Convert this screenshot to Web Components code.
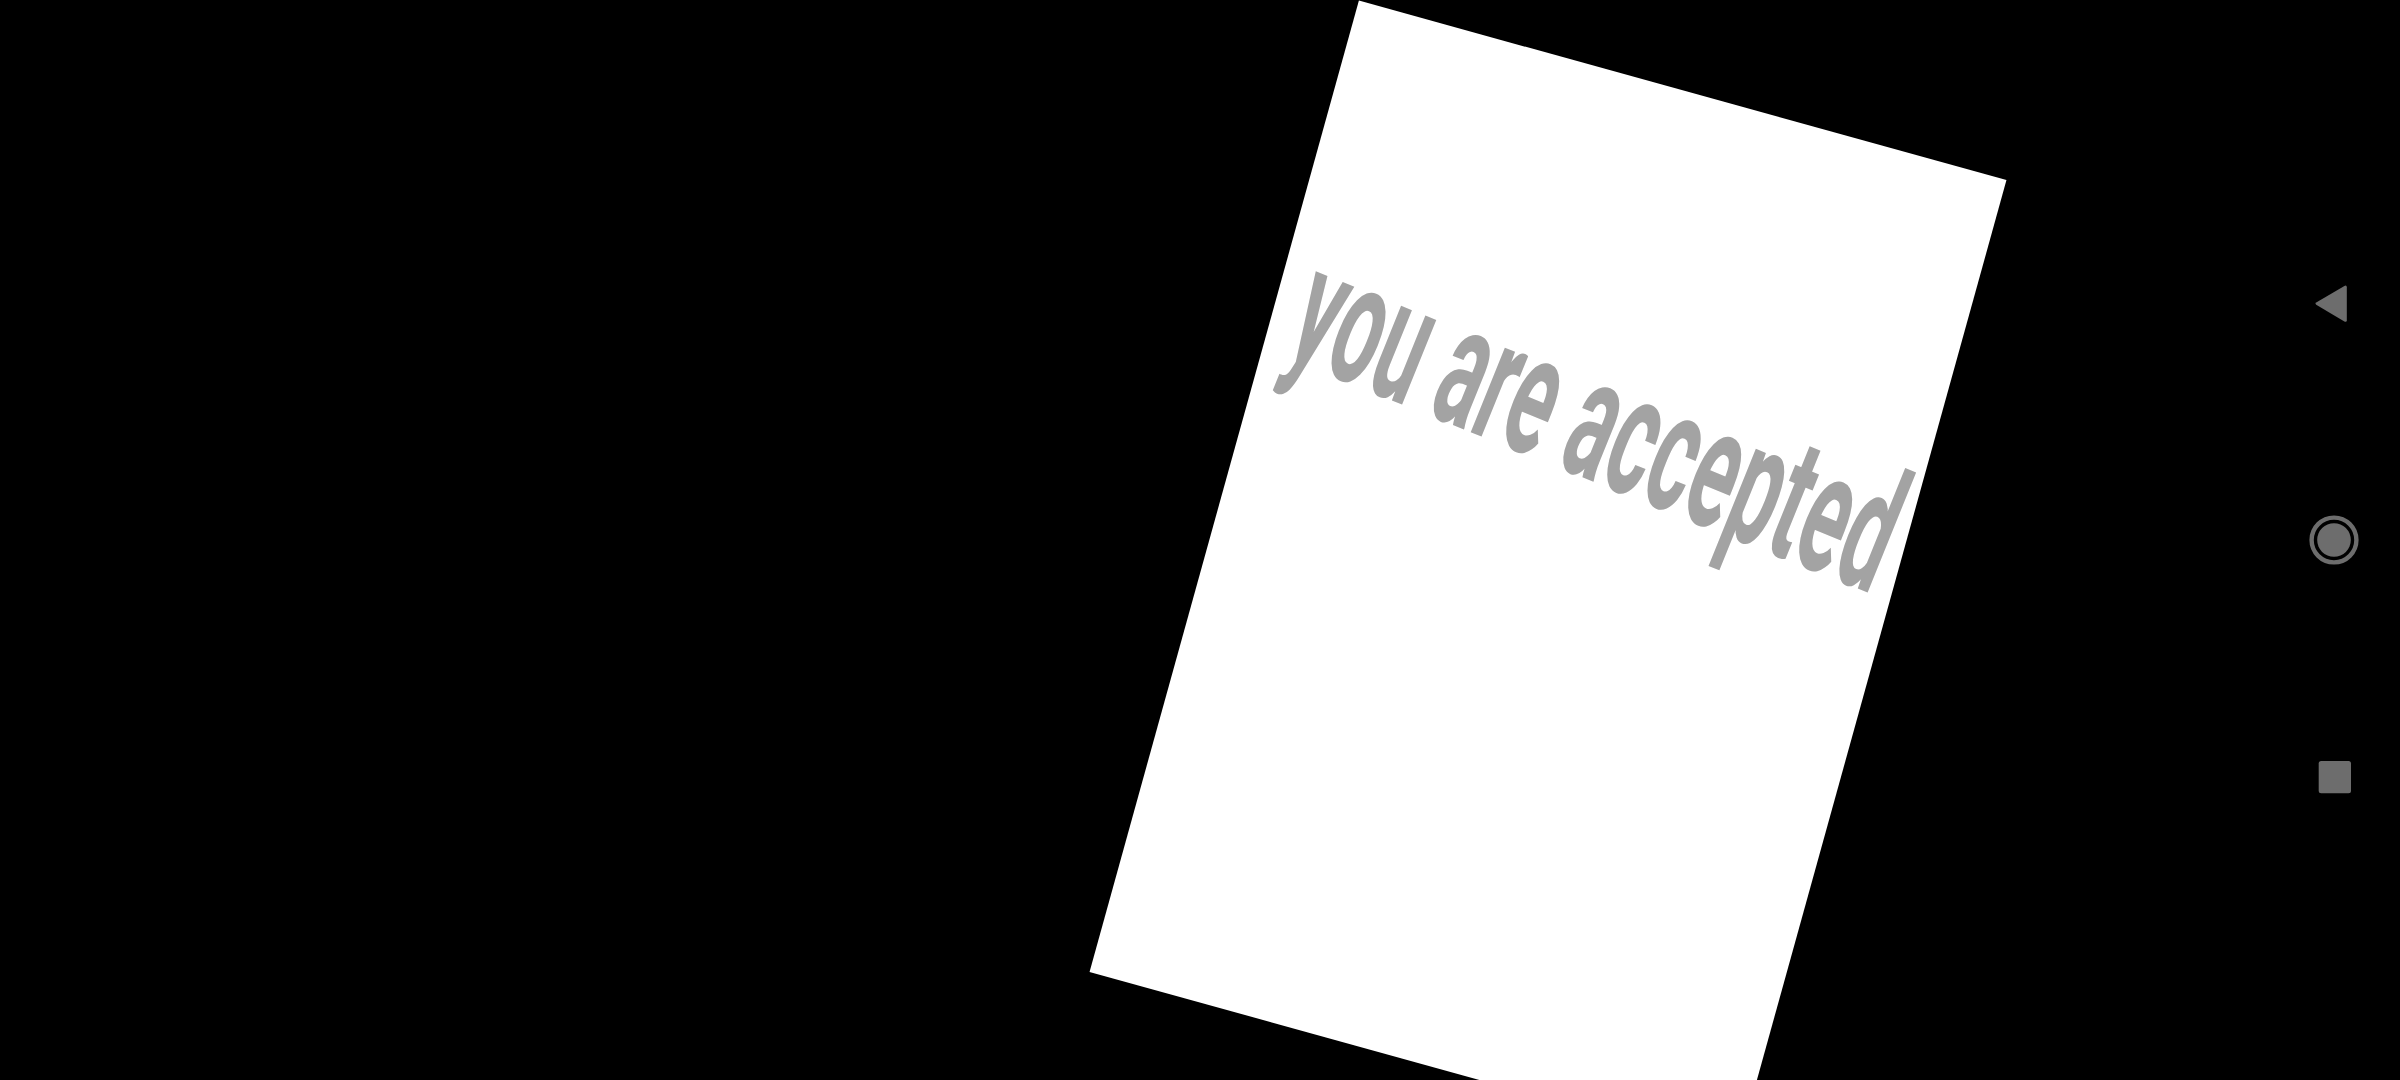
<!DOCTYPE html>
<html>
<head>
<meta charset="utf-8">
<title>you are accepted</title>
<style>
  html, body { margin: 0; height: 100%; background: #000; }
  body { overflow: hidden; }
</style>
</head>
<body>
<phone-screen>
  <paper-sheet>
    <stretched-label>you are accepted</stretched-label>
  </paper-sheet>
</phone-screen>

<template id="phone-screen-tpl">
  <style>
    :host {
      display: flex;
      width: 2400px;
      height: 1080px;
      background: #000;
      overflow: hidden;
    }
    #canvas {
      flex: 1;
      position: relative;
      overflow: hidden;
    }
  </style>
  <div id="canvas"><slot></slot></div>
  <nav-rail></nav-rail>
</template>

<template id="paper-sheet-tpl">
  <style>
    :host {
      position: absolute;
      left: 1212px;
      top: 71.5px;
      width: 672px;
      height: 1008px;
      box-sizing: border-box;
      padding-top: 327px;
      background: #fff;
      transform: rotate(15.5deg);
      display: flex;
      flex-direction: column;
      align-items: center;
    }
  </style>
  <slot></slot>
</template>

<template id="stretched-label-tpl">
  <style>
    :host {
      display: block;
      font: bold 83px/92px Roboto, sans-serif;
      color: #a3a3a3;
      white-space: nowrap;
      text-rendering: geometricPrecision;
      transform-origin: 50% 74px;
      transform: rotate(6.5deg) scaleY(2.08);
    }
  </style>
  <slot></slot>
</template>

<template id="nav-rail-tpl">
  <style>
    :host {
      flex: none;
      width: 132px;
      height: 100%;
      display: flex;
      flex-direction: column;
      align-items: center;
      justify-content: center;
      gap: 176px;
    }
    svg { display: block; width: 60px; height: 60px; fill: #6d6d6d; }
  </style>
  <svg viewBox="0 0 60 60">
    <path d="M12.2 28.6 40.4 11.9Q42.8 10.8 42.8 13.2V46.2Q42.8 48.6 40.4 47.5L12.2 30.8Q10.6 29.7 12.2 28.6Z"/>
  </svg>
  <svg viewBox="0 0 60 60">
    <circle cx="30" cy="30" r="16.8"/>
    <circle cx="30" cy="30" r="22.4" fill="none" stroke="#6d6d6d" stroke-width="4.4"/>
  </svg>
  <svg viewBox="0 0 60 60">
    <rect x="14.7" y="15" width="32.3" height="32.3" rx="2.5"/>
  </svg>
</template>

<script>
  function define(name) {
    const tpl = document.getElementById(name + '-tpl');
    customElements.define(name, class extends HTMLElement {
      constructor() {
        super();
        this.attachShadow({ mode: 'open' }).appendChild(tpl.content.cloneNode(true));
      }
    });
  }
  ['nav-rail', 'stretched-label', 'paper-sheet', 'phone-screen'].forEach(define);
</script>
</body>
</html>
